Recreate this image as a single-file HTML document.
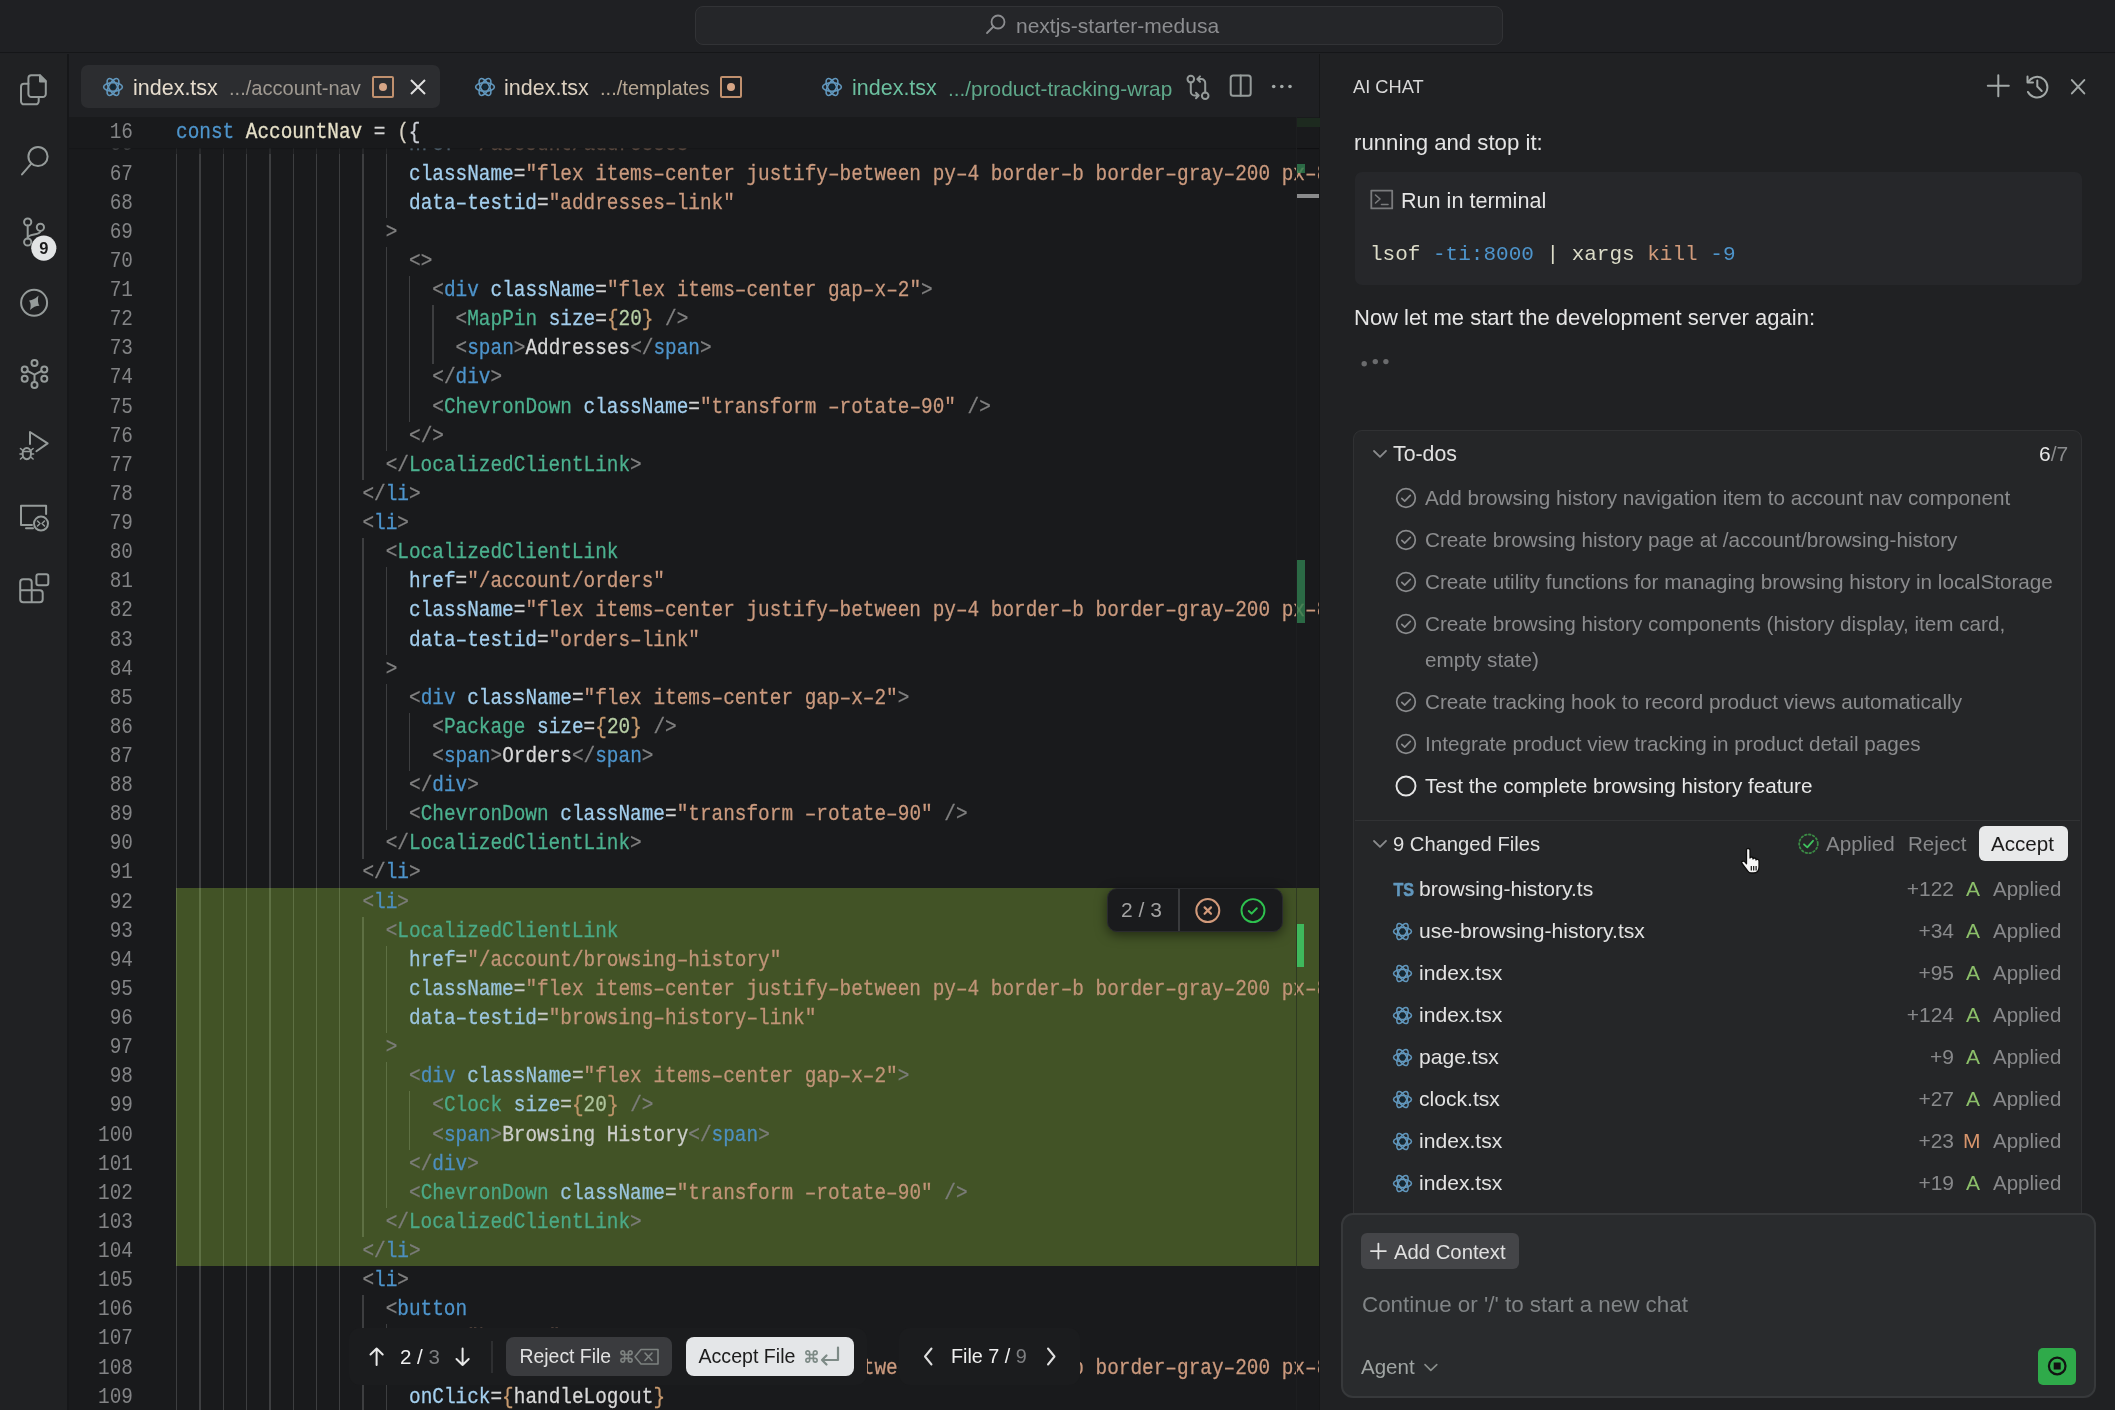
<!DOCTYPE html>
<html><head><meta charset="utf-8">
<style>
*{box-sizing:border-box;margin:0;padding:0}
html,body{width:2115px;height:1410px;overflow:hidden;background:#1f2023;font-family:"Liberation Sans",sans-serif}
body{will-change:transform}
.abs{position:absolute}
#title{position:absolute;left:0;top:0;width:2115px;height:53px;background:#1f2023;border-bottom:1px solid #151618}
#search{position:absolute;left:695px;top:6px;width:808px;height:39px;border-radius:8px;background:#252629;border:1px solid #323336}
#search .t{position:absolute;left:320px;top:6.5px;font-size:21px;color:#8c8d90;white-space:pre}
#act{position:absolute;left:0;top:54px;width:69px;height:1356px;background:#202123;border-right:2px solid #161719}
#tabs{position:absolute;left:69px;top:54px;width:1251px;height:63px;background:#1f2023}
.tab{position:absolute;top:11px;height:43px;border-radius:7px}
.tab.active{background:#2c2d30}
.tabtxt{position:absolute;top:10px;margin-top:1.5px;font-size:21.5px;white-space:pre}
#editor{position:absolute;left:69px;top:117px;width:1251px;height:1293px;background:#191a1c;overflow:hidden}
#code{position:absolute;left:-69px;top:-117px;width:1320px;height:1410px}
.ln{position:absolute;transform:scaleY(1.1);transform-origin:0 19.7px;-webkit-text-stroke:0.25px currentColor;font-family:"Liberation Mono",monospace;font-size:19.4px;line-height:29.12px;height:29.12px;white-space:pre;color:#d4d4d4}
.num{position:absolute;transform:scaleY(1.1);transform-origin:0 19.7px;left:60px;width:73px;text-align:right;font-family:"Liberation Mono",monospace;font-size:19.4px;line-height:29.12px;color:#838486}
.g{position:absolute;width:1.4px;background:#37383a}
.p{color:#808080} .t{color:#4e95cc} .c{color:#4cb18f} .a{color:#a3cfee} .s{color:#cb9a7e} .n{color:#b8cfa6} .b{color:#c89a6e} .x{color:#d8d8d8} .o{color:#d4d4d4} .k{color:#4e95cc}
#diff{position:absolute;left:176px;top:887.6px;width:1144px;height:378.4px;background:#425326}
#chat{position:absolute;left:1319px;top:54px;width:796px;height:1356px;background:#202123;border-left:1px solid #161718}
.ct{position:absolute;white-space:pre;color:#e4e4e4}
#term{position:absolute;left:1355px;top:172px;width:727px;height:113px;border-radius:7px;background:#26272a}
#todos{position:absolute;left:1353px;top:430px;width:729px;height:800px;border-radius:9px;background:#252628;border:1.5px solid #303133}
.todo{position:absolute;left:1425px;font-size:20.7px;color:#8b8c8e;white-space:pre}
.todo.cur{color:#e8e8e8}
.todo-ic{position:absolute;left:1395px;width:22px;height:22px}
.fic{position:absolute;left:1392px;width:22px;height:22px}
.tsic{font-weight:bold;font-size:17px;color:#4a8fbf;letter-spacing:-1px;position:relative;top:1px}
.fname{position:absolute;left:1419px;font-size:21.1px;color:#e2e2e2;white-space:pre}
.fplus{position:absolute;right:161px;font-size:21px;color:#88898b;white-space:pre}
.fst{position:absolute;left:1966px;font-size:21px;color:#8cbf6a;white-space:pre}
.fst.m{color:#d8956c;left:1963px}
.fapp{position:absolute;left:1993px;font-size:20.5px;color:#88898b;white-space:pre}
#input{position:absolute;left:1341px;top:1213px;width:755px;height:185px;border-radius:12px;background:#292b2d;border:2px solid #37393b}
</style></head><body>
<div id="title"><div id="search"><div class="t"><svg width="24" height="24" viewBox="0 0 24 24" style="position:absolute;left:-32px;top:-1px"><circle cx="14" cy="9" r="6.5" fill="none" stroke="#8c8d90" stroke-width="1.8"/><path d="M9.5 13.5L3 20" stroke="#8c8d90" stroke-width="1.8" stroke-linecap="round"/></svg>nextjs-starter-medusa</div></div></div>
<div id="act"></div>
<div id="tabs">
  <div class="tab active" style="left:12px;width:359px"></div>
</div>
<div class="abs" style="left:102px;top:76px"><svg width="22" height="22" viewBox="-11 -11 22 22"><g fill="none" stroke="#6197bd" stroke-width="1.6"><ellipse rx="9.4" ry="4.2"/><ellipse rx="9.4" ry="4.2" transform="rotate(60)"/><ellipse rx="9.4" ry="4.2" transform="rotate(120)"/></g><circle r="2.4" fill="#0f2a3a"/></svg></div>
<div class="tabtxt abs" style="left:133px;top:74px;color:#e6dccd">index.tsx</div>
<div class="tabtxt abs" style="left:229px;top:75px;color:#a09a92;font-size:20.1px">.../account-nav</div>
<div class="abs" style="left:372px;top:76px;width:22px;height:22px;border:2px solid #c0906e;border-radius:2px"><div style="position:absolute;left:5px;top:5px;width:8px;height:8px;border-radius:50%;background:#d6a586"></div></div>
<div class="abs" style="left:409px;top:78px"><svg width="18" height="18" viewBox="0 0 18 18"><path d="M2 2L16 16M16 2L2 16" stroke="#e0e0e0" stroke-width="2"/></svg></div>
<div class="abs" style="left:474px;top:76px"><svg width="22" height="22" viewBox="-11 -11 22 22"><g fill="none" stroke="#6197bd" stroke-width="1.6"><ellipse rx="9.4" ry="4.2"/><ellipse rx="9.4" ry="4.2" transform="rotate(60)"/><ellipse rx="9.4" ry="4.2" transform="rotate(120)"/></g><circle r="2.4" fill="#0f2a3a"/></svg></div>
<div class="tabtxt abs" style="left:504px;top:74px;color:#dcd0c0">index.tsx</div>
<div class="tabtxt abs" style="left:600px;top:75px;color:#b7a794;font-size:20.1px">.../templates</div>
<div class="abs" style="left:720px;top:76px;width:22px;height:22px;border:2px solid #c0906e;border-radius:2px"><div style="position:absolute;left:5px;top:5px;width:8px;height:8px;border-radius:50%;background:#d6a586"></div></div>
<div class="abs" style="left:821px;top:76px"><svg width="22" height="22" viewBox="-11 -11 22 22"><g fill="none" stroke="#6197bd" stroke-width="1.6"><ellipse rx="9.4" ry="4.2"/><ellipse rx="9.4" ry="4.2" transform="rotate(60)"/><ellipse rx="9.4" ry="4.2" transform="rotate(120)"/></g><circle r="2.4" fill="#0f2a3a"/></svg></div>
<div class="tabtxt abs" style="left:852px;top:74px;color:#6cbf9f">index.tsx</div>
<div class="tabtxt abs" style="left:948px;top:75px;color:#5fa88a;font-size:20.8px">.../product-tracking-wrap</div>

<div id="editor"><div id="code">
<div id="diff"></div>
<div class="g" style="left:176.00px;top:130.48px;height:29.42px;background:#3d3e40"></div><div class="g" style="left:199.30px;top:130.48px;height:29.42px;background:#3d3e40"></div><div class="g" style="left:222.60px;top:130.48px;height:29.42px;background:#3d3e40"></div><div class="g" style="left:245.90px;top:130.48px;height:29.42px;background:#3d3e40"></div><div class="g" style="left:269.20px;top:130.48px;height:29.42px;background:#3d3e40"></div><div class="g" style="left:292.50px;top:130.48px;height:29.42px;background:#3d3e40"></div><div class="g" style="left:315.80px;top:130.48px;height:29.42px;background:#3d3e40"></div><div class="g" style="left:339.10px;top:130.48px;height:29.42px;background:#3d3e40"></div><div class="g" style="left:362.40px;top:130.48px;height:29.42px;background:#3d3e40"></div><div class="g" style="left:385.70px;top:130.48px;height:29.42px;background:#3d3e40"></div><div class="g" style="left:176.00px;top:159.60px;height:29.42px;background:#3d3e40"></div><div class="g" style="left:199.30px;top:159.60px;height:29.42px;background:#3d3e40"></div><div class="g" style="left:222.60px;top:159.60px;height:29.42px;background:#3d3e40"></div><div class="g" style="left:245.90px;top:159.60px;height:29.42px;background:#3d3e40"></div><div class="g" style="left:269.20px;top:159.60px;height:29.42px;background:#3d3e40"></div><div class="g" style="left:292.50px;top:159.60px;height:29.42px;background:#3d3e40"></div><div class="g" style="left:315.80px;top:159.60px;height:29.42px;background:#3d3e40"></div><div class="g" style="left:339.10px;top:159.60px;height:29.42px;background:#3d3e40"></div><div class="g" style="left:362.40px;top:159.60px;height:29.42px;background:#3d3e40"></div><div class="g" style="left:385.70px;top:159.60px;height:29.42px;background:#3d3e40"></div><div class="g" style="left:176.00px;top:188.72px;height:29.42px;background:#3d3e40"></div><div class="g" style="left:199.30px;top:188.72px;height:29.42px;background:#3d3e40"></div><div class="g" style="left:222.60px;top:188.72px;height:29.42px;background:#3d3e40"></div><div class="g" style="left:245.90px;top:188.72px;height:29.42px;background:#3d3e40"></div><div class="g" style="left:269.20px;top:188.72px;height:29.42px;background:#3d3e40"></div><div class="g" style="left:292.50px;top:188.72px;height:29.42px;background:#3d3e40"></div><div class="g" style="left:315.80px;top:188.72px;height:29.42px;background:#3d3e40"></div><div class="g" style="left:339.10px;top:188.72px;height:29.42px;background:#3d3e40"></div><div class="g" style="left:362.40px;top:188.72px;height:29.42px;background:#3d3e40"></div><div class="g" style="left:385.70px;top:188.72px;height:29.42px;background:#3d3e40"></div><div class="g" style="left:176.00px;top:217.84px;height:29.42px;background:#3d3e40"></div><div class="g" style="left:199.30px;top:217.84px;height:29.42px;background:#3d3e40"></div><div class="g" style="left:222.60px;top:217.84px;height:29.42px;background:#3d3e40"></div><div class="g" style="left:245.90px;top:217.84px;height:29.42px;background:#3d3e40"></div><div class="g" style="left:269.20px;top:217.84px;height:29.42px;background:#3d3e40"></div><div class="g" style="left:292.50px;top:217.84px;height:29.42px;background:#3d3e40"></div><div class="g" style="left:315.80px;top:217.84px;height:29.42px;background:#3d3e40"></div><div class="g" style="left:339.10px;top:217.84px;height:29.42px;background:#3d3e40"></div><div class="g" style="left:362.40px;top:217.84px;height:29.42px;background:#3d3e40"></div><div class="g" style="left:176.00px;top:246.96px;height:29.42px;background:#3d3e40"></div><div class="g" style="left:199.30px;top:246.96px;height:29.42px;background:#3d3e40"></div><div class="g" style="left:222.60px;top:246.96px;height:29.42px;background:#3d3e40"></div><div class="g" style="left:245.90px;top:246.96px;height:29.42px;background:#3d3e40"></div><div class="g" style="left:269.20px;top:246.96px;height:29.42px;background:#3d3e40"></div><div class="g" style="left:292.50px;top:246.96px;height:29.42px;background:#3d3e40"></div><div class="g" style="left:315.80px;top:246.96px;height:29.42px;background:#3d3e40"></div><div class="g" style="left:339.10px;top:246.96px;height:29.42px;background:#3d3e40"></div><div class="g" style="left:362.40px;top:246.96px;height:29.42px;background:#3d3e40"></div><div class="g" style="left:385.70px;top:246.96px;height:29.42px;background:#3d3e40"></div><div class="g" style="left:176.00px;top:276.08px;height:29.42px;background:#3d3e40"></div><div class="g" style="left:199.30px;top:276.08px;height:29.42px;background:#3d3e40"></div><div class="g" style="left:222.60px;top:276.08px;height:29.42px;background:#3d3e40"></div><div class="g" style="left:245.90px;top:276.08px;height:29.42px;background:#3d3e40"></div><div class="g" style="left:269.20px;top:276.08px;height:29.42px;background:#3d3e40"></div><div class="g" style="left:292.50px;top:276.08px;height:29.42px;background:#3d3e40"></div><div class="g" style="left:315.80px;top:276.08px;height:29.42px;background:#3d3e40"></div><div class="g" style="left:339.10px;top:276.08px;height:29.42px;background:#3d3e40"></div><div class="g" style="left:362.40px;top:276.08px;height:29.42px;background:#3d3e40"></div><div class="g" style="left:385.70px;top:276.08px;height:29.42px;background:#3d3e40"></div><div class="g" style="left:409.00px;top:276.08px;height:29.42px;background:#3d3e40"></div><div class="g" style="left:176.00px;top:305.20px;height:29.42px;background:#3d3e40"></div><div class="g" style="left:199.30px;top:305.20px;height:29.42px;background:#3d3e40"></div><div class="g" style="left:222.60px;top:305.20px;height:29.42px;background:#3d3e40"></div><div class="g" style="left:245.90px;top:305.20px;height:29.42px;background:#3d3e40"></div><div class="g" style="left:269.20px;top:305.20px;height:29.42px;background:#3d3e40"></div><div class="g" style="left:292.50px;top:305.20px;height:29.42px;background:#3d3e40"></div><div class="g" style="left:315.80px;top:305.20px;height:29.42px;background:#3d3e40"></div><div class="g" style="left:339.10px;top:305.20px;height:29.42px;background:#3d3e40"></div><div class="g" style="left:362.40px;top:305.20px;height:29.42px;background:#3d3e40"></div><div class="g" style="left:385.70px;top:305.20px;height:29.42px;background:#3d3e40"></div><div class="g" style="left:409.00px;top:305.20px;height:29.42px;background:#3d3e40"></div><div class="g" style="left:432.30px;top:305.20px;height:29.42px;background:#3d3e40"></div><div class="g" style="left:176.00px;top:334.32px;height:29.42px;background:#3d3e40"></div><div class="g" style="left:199.30px;top:334.32px;height:29.42px;background:#3d3e40"></div><div class="g" style="left:222.60px;top:334.32px;height:29.42px;background:#3d3e40"></div><div class="g" style="left:245.90px;top:334.32px;height:29.42px;background:#3d3e40"></div><div class="g" style="left:269.20px;top:334.32px;height:29.42px;background:#3d3e40"></div><div class="g" style="left:292.50px;top:334.32px;height:29.42px;background:#3d3e40"></div><div class="g" style="left:315.80px;top:334.32px;height:29.42px;background:#3d3e40"></div><div class="g" style="left:339.10px;top:334.32px;height:29.42px;background:#3d3e40"></div><div class="g" style="left:362.40px;top:334.32px;height:29.42px;background:#3d3e40"></div><div class="g" style="left:385.70px;top:334.32px;height:29.42px;background:#3d3e40"></div><div class="g" style="left:409.00px;top:334.32px;height:29.42px;background:#3d3e40"></div><div class="g" style="left:432.30px;top:334.32px;height:29.42px;background:#3d3e40"></div><div class="g" style="left:176.00px;top:363.44px;height:29.42px;background:#3d3e40"></div><div class="g" style="left:199.30px;top:363.44px;height:29.42px;background:#3d3e40"></div><div class="g" style="left:222.60px;top:363.44px;height:29.42px;background:#3d3e40"></div><div class="g" style="left:245.90px;top:363.44px;height:29.42px;background:#3d3e40"></div><div class="g" style="left:269.20px;top:363.44px;height:29.42px;background:#3d3e40"></div><div class="g" style="left:292.50px;top:363.44px;height:29.42px;background:#3d3e40"></div><div class="g" style="left:315.80px;top:363.44px;height:29.42px;background:#3d3e40"></div><div class="g" style="left:339.10px;top:363.44px;height:29.42px;background:#3d3e40"></div><div class="g" style="left:362.40px;top:363.44px;height:29.42px;background:#3d3e40"></div><div class="g" style="left:385.70px;top:363.44px;height:29.42px;background:#3d3e40"></div><div class="g" style="left:409.00px;top:363.44px;height:29.42px;background:#3d3e40"></div><div class="g" style="left:176.00px;top:392.56px;height:29.42px;background:#3d3e40"></div><div class="g" style="left:199.30px;top:392.56px;height:29.42px;background:#3d3e40"></div><div class="g" style="left:222.60px;top:392.56px;height:29.42px;background:#3d3e40"></div><div class="g" style="left:245.90px;top:392.56px;height:29.42px;background:#3d3e40"></div><div class="g" style="left:269.20px;top:392.56px;height:29.42px;background:#3d3e40"></div><div class="g" style="left:292.50px;top:392.56px;height:29.42px;background:#3d3e40"></div><div class="g" style="left:315.80px;top:392.56px;height:29.42px;background:#3d3e40"></div><div class="g" style="left:339.10px;top:392.56px;height:29.42px;background:#3d3e40"></div><div class="g" style="left:362.40px;top:392.56px;height:29.42px;background:#3d3e40"></div><div class="g" style="left:385.70px;top:392.56px;height:29.42px;background:#3d3e40"></div><div class="g" style="left:409.00px;top:392.56px;height:29.42px;background:#3d3e40"></div><div class="g" style="left:176.00px;top:421.68px;height:29.42px;background:#3d3e40"></div><div class="g" style="left:199.30px;top:421.68px;height:29.42px;background:#3d3e40"></div><div class="g" style="left:222.60px;top:421.68px;height:29.42px;background:#3d3e40"></div><div class="g" style="left:245.90px;top:421.68px;height:29.42px;background:#3d3e40"></div><div class="g" style="left:269.20px;top:421.68px;height:29.42px;background:#3d3e40"></div><div class="g" style="left:292.50px;top:421.68px;height:29.42px;background:#3d3e40"></div><div class="g" style="left:315.80px;top:421.68px;height:29.42px;background:#3d3e40"></div><div class="g" style="left:339.10px;top:421.68px;height:29.42px;background:#3d3e40"></div><div class="g" style="left:362.40px;top:421.68px;height:29.42px;background:#3d3e40"></div><div class="g" style="left:385.70px;top:421.68px;height:29.42px;background:#3d3e40"></div><div class="g" style="left:176.00px;top:450.80px;height:29.42px;background:#3d3e40"></div><div class="g" style="left:199.30px;top:450.80px;height:29.42px;background:#3d3e40"></div><div class="g" style="left:222.60px;top:450.80px;height:29.42px;background:#3d3e40"></div><div class="g" style="left:245.90px;top:450.80px;height:29.42px;background:#3d3e40"></div><div class="g" style="left:269.20px;top:450.80px;height:29.42px;background:#3d3e40"></div><div class="g" style="left:292.50px;top:450.80px;height:29.42px;background:#3d3e40"></div><div class="g" style="left:315.80px;top:450.80px;height:29.42px;background:#3d3e40"></div><div class="g" style="left:339.10px;top:450.80px;height:29.42px;background:#3d3e40"></div><div class="g" style="left:362.40px;top:450.80px;height:29.42px;background:#3d3e40"></div><div class="g" style="left:176.00px;top:479.92px;height:29.42px;background:#3d3e40"></div><div class="g" style="left:199.30px;top:479.92px;height:29.42px;background:#3d3e40"></div><div class="g" style="left:222.60px;top:479.92px;height:29.42px;background:#3d3e40"></div><div class="g" style="left:245.90px;top:479.92px;height:29.42px;background:#3d3e40"></div><div class="g" style="left:269.20px;top:479.92px;height:29.42px;background:#3d3e40"></div><div class="g" style="left:292.50px;top:479.92px;height:29.42px;background:#3d3e40"></div><div class="g" style="left:315.80px;top:479.92px;height:29.42px;background:#3d3e40"></div><div class="g" style="left:339.10px;top:479.92px;height:29.42px;background:#3d3e40"></div><div class="g" style="left:176.00px;top:509.04px;height:29.42px;background:#3d3e40"></div><div class="g" style="left:199.30px;top:509.04px;height:29.42px;background:#3d3e40"></div><div class="g" style="left:222.60px;top:509.04px;height:29.42px;background:#3d3e40"></div><div class="g" style="left:245.90px;top:509.04px;height:29.42px;background:#3d3e40"></div><div class="g" style="left:269.20px;top:509.04px;height:29.42px;background:#3d3e40"></div><div class="g" style="left:292.50px;top:509.04px;height:29.42px;background:#3d3e40"></div><div class="g" style="left:315.80px;top:509.04px;height:29.42px;background:#3d3e40"></div><div class="g" style="left:339.10px;top:509.04px;height:29.42px;background:#3d3e40"></div><div class="g" style="left:176.00px;top:538.16px;height:29.42px;background:#3d3e40"></div><div class="g" style="left:199.30px;top:538.16px;height:29.42px;background:#3d3e40"></div><div class="g" style="left:222.60px;top:538.16px;height:29.42px;background:#3d3e40"></div><div class="g" style="left:245.90px;top:538.16px;height:29.42px;background:#3d3e40"></div><div class="g" style="left:269.20px;top:538.16px;height:29.42px;background:#3d3e40"></div><div class="g" style="left:292.50px;top:538.16px;height:29.42px;background:#3d3e40"></div><div class="g" style="left:315.80px;top:538.16px;height:29.42px;background:#3d3e40"></div><div class="g" style="left:339.10px;top:538.16px;height:29.42px;background:#3d3e40"></div><div class="g" style="left:362.40px;top:538.16px;height:29.42px;background:#3d3e40"></div><div class="g" style="left:176.00px;top:567.28px;height:29.42px;background:#3d3e40"></div><div class="g" style="left:199.30px;top:567.28px;height:29.42px;background:#3d3e40"></div><div class="g" style="left:222.60px;top:567.28px;height:29.42px;background:#3d3e40"></div><div class="g" style="left:245.90px;top:567.28px;height:29.42px;background:#3d3e40"></div><div class="g" style="left:269.20px;top:567.28px;height:29.42px;background:#3d3e40"></div><div class="g" style="left:292.50px;top:567.28px;height:29.42px;background:#3d3e40"></div><div class="g" style="left:315.80px;top:567.28px;height:29.42px;background:#3d3e40"></div><div class="g" style="left:339.10px;top:567.28px;height:29.42px;background:#3d3e40"></div><div class="g" style="left:362.40px;top:567.28px;height:29.42px;background:#3d3e40"></div><div class="g" style="left:385.70px;top:567.28px;height:29.42px;background:#3d3e40"></div><div class="g" style="left:176.00px;top:596.40px;height:29.42px;background:#3d3e40"></div><div class="g" style="left:199.30px;top:596.40px;height:29.42px;background:#3d3e40"></div><div class="g" style="left:222.60px;top:596.40px;height:29.42px;background:#3d3e40"></div><div class="g" style="left:245.90px;top:596.40px;height:29.42px;background:#3d3e40"></div><div class="g" style="left:269.20px;top:596.40px;height:29.42px;background:#3d3e40"></div><div class="g" style="left:292.50px;top:596.40px;height:29.42px;background:#3d3e40"></div><div class="g" style="left:315.80px;top:596.40px;height:29.42px;background:#3d3e40"></div><div class="g" style="left:339.10px;top:596.40px;height:29.42px;background:#3d3e40"></div><div class="g" style="left:362.40px;top:596.40px;height:29.42px;background:#3d3e40"></div><div class="g" style="left:385.70px;top:596.40px;height:29.42px;background:#3d3e40"></div><div class="g" style="left:176.00px;top:625.52px;height:29.42px;background:#3d3e40"></div><div class="g" style="left:199.30px;top:625.52px;height:29.42px;background:#3d3e40"></div><div class="g" style="left:222.60px;top:625.52px;height:29.42px;background:#3d3e40"></div><div class="g" style="left:245.90px;top:625.52px;height:29.42px;background:#3d3e40"></div><div class="g" style="left:269.20px;top:625.52px;height:29.42px;background:#3d3e40"></div><div class="g" style="left:292.50px;top:625.52px;height:29.42px;background:#3d3e40"></div><div class="g" style="left:315.80px;top:625.52px;height:29.42px;background:#3d3e40"></div><div class="g" style="left:339.10px;top:625.52px;height:29.42px;background:#3d3e40"></div><div class="g" style="left:362.40px;top:625.52px;height:29.42px;background:#3d3e40"></div><div class="g" style="left:385.70px;top:625.52px;height:29.42px;background:#3d3e40"></div><div class="g" style="left:176.00px;top:654.64px;height:29.42px;background:#3d3e40"></div><div class="g" style="left:199.30px;top:654.64px;height:29.42px;background:#3d3e40"></div><div class="g" style="left:222.60px;top:654.64px;height:29.42px;background:#3d3e40"></div><div class="g" style="left:245.90px;top:654.64px;height:29.42px;background:#3d3e40"></div><div class="g" style="left:269.20px;top:654.64px;height:29.42px;background:#3d3e40"></div><div class="g" style="left:292.50px;top:654.64px;height:29.42px;background:#3d3e40"></div><div class="g" style="left:315.80px;top:654.64px;height:29.42px;background:#3d3e40"></div><div class="g" style="left:339.10px;top:654.64px;height:29.42px;background:#3d3e40"></div><div class="g" style="left:362.40px;top:654.64px;height:29.42px;background:#3d3e40"></div><div class="g" style="left:176.00px;top:683.76px;height:29.42px;background:#3d3e40"></div><div class="g" style="left:199.30px;top:683.76px;height:29.42px;background:#3d3e40"></div><div class="g" style="left:222.60px;top:683.76px;height:29.42px;background:#3d3e40"></div><div class="g" style="left:245.90px;top:683.76px;height:29.42px;background:#3d3e40"></div><div class="g" style="left:269.20px;top:683.76px;height:29.42px;background:#3d3e40"></div><div class="g" style="left:292.50px;top:683.76px;height:29.42px;background:#3d3e40"></div><div class="g" style="left:315.80px;top:683.76px;height:29.42px;background:#3d3e40"></div><div class="g" style="left:339.10px;top:683.76px;height:29.42px;background:#3d3e40"></div><div class="g" style="left:362.40px;top:683.76px;height:29.42px;background:#3d3e40"></div><div class="g" style="left:385.70px;top:683.76px;height:29.42px;background:#3d3e40"></div><div class="g" style="left:176.00px;top:712.88px;height:29.42px;background:#3d3e40"></div><div class="g" style="left:199.30px;top:712.88px;height:29.42px;background:#3d3e40"></div><div class="g" style="left:222.60px;top:712.88px;height:29.42px;background:#3d3e40"></div><div class="g" style="left:245.90px;top:712.88px;height:29.42px;background:#3d3e40"></div><div class="g" style="left:269.20px;top:712.88px;height:29.42px;background:#3d3e40"></div><div class="g" style="left:292.50px;top:712.88px;height:29.42px;background:#3d3e40"></div><div class="g" style="left:315.80px;top:712.88px;height:29.42px;background:#3d3e40"></div><div class="g" style="left:339.10px;top:712.88px;height:29.42px;background:#3d3e40"></div><div class="g" style="left:362.40px;top:712.88px;height:29.42px;background:#3d3e40"></div><div class="g" style="left:385.70px;top:712.88px;height:29.42px;background:#3d3e40"></div><div class="g" style="left:409.00px;top:712.88px;height:29.42px;background:#3d3e40"></div><div class="g" style="left:176.00px;top:742.00px;height:29.42px;background:#3d3e40"></div><div class="g" style="left:199.30px;top:742.00px;height:29.42px;background:#3d3e40"></div><div class="g" style="left:222.60px;top:742.00px;height:29.42px;background:#3d3e40"></div><div class="g" style="left:245.90px;top:742.00px;height:29.42px;background:#3d3e40"></div><div class="g" style="left:269.20px;top:742.00px;height:29.42px;background:#3d3e40"></div><div class="g" style="left:292.50px;top:742.00px;height:29.42px;background:#3d3e40"></div><div class="g" style="left:315.80px;top:742.00px;height:29.42px;background:#3d3e40"></div><div class="g" style="left:339.10px;top:742.00px;height:29.42px;background:#3d3e40"></div><div class="g" style="left:362.40px;top:742.00px;height:29.42px;background:#3d3e40"></div><div class="g" style="left:385.70px;top:742.00px;height:29.42px;background:#3d3e40"></div><div class="g" style="left:409.00px;top:742.00px;height:29.42px;background:#3d3e40"></div><div class="g" style="left:176.00px;top:771.12px;height:29.42px;background:#3d3e40"></div><div class="g" style="left:199.30px;top:771.12px;height:29.42px;background:#3d3e40"></div><div class="g" style="left:222.60px;top:771.12px;height:29.42px;background:#3d3e40"></div><div class="g" style="left:245.90px;top:771.12px;height:29.42px;background:#3d3e40"></div><div class="g" style="left:269.20px;top:771.12px;height:29.42px;background:#3d3e40"></div><div class="g" style="left:292.50px;top:771.12px;height:29.42px;background:#3d3e40"></div><div class="g" style="left:315.80px;top:771.12px;height:29.42px;background:#3d3e40"></div><div class="g" style="left:339.10px;top:771.12px;height:29.42px;background:#3d3e40"></div><div class="g" style="left:362.40px;top:771.12px;height:29.42px;background:#3d3e40"></div><div class="g" style="left:385.70px;top:771.12px;height:29.42px;background:#3d3e40"></div><div class="g" style="left:176.00px;top:800.24px;height:29.42px;background:#3d3e40"></div><div class="g" style="left:199.30px;top:800.24px;height:29.42px;background:#3d3e40"></div><div class="g" style="left:222.60px;top:800.24px;height:29.42px;background:#3d3e40"></div><div class="g" style="left:245.90px;top:800.24px;height:29.42px;background:#3d3e40"></div><div class="g" style="left:269.20px;top:800.24px;height:29.42px;background:#3d3e40"></div><div class="g" style="left:292.50px;top:800.24px;height:29.42px;background:#3d3e40"></div><div class="g" style="left:315.80px;top:800.24px;height:29.42px;background:#3d3e40"></div><div class="g" style="left:339.10px;top:800.24px;height:29.42px;background:#3d3e40"></div><div class="g" style="left:362.40px;top:800.24px;height:29.42px;background:#3d3e40"></div><div class="g" style="left:385.70px;top:800.24px;height:29.42px;background:#3d3e40"></div><div class="g" style="left:176.00px;top:829.36px;height:29.42px;background:#3d3e40"></div><div class="g" style="left:199.30px;top:829.36px;height:29.42px;background:#3d3e40"></div><div class="g" style="left:222.60px;top:829.36px;height:29.42px;background:#3d3e40"></div><div class="g" style="left:245.90px;top:829.36px;height:29.42px;background:#3d3e40"></div><div class="g" style="left:269.20px;top:829.36px;height:29.42px;background:#3d3e40"></div><div class="g" style="left:292.50px;top:829.36px;height:29.42px;background:#3d3e40"></div><div class="g" style="left:315.80px;top:829.36px;height:29.42px;background:#3d3e40"></div><div class="g" style="left:339.10px;top:829.36px;height:29.42px;background:#3d3e40"></div><div class="g" style="left:362.40px;top:829.36px;height:29.42px;background:#3d3e40"></div><div class="g" style="left:176.00px;top:858.48px;height:29.42px;background:#3d3e40"></div><div class="g" style="left:199.30px;top:858.48px;height:29.42px;background:#3d3e40"></div><div class="g" style="left:222.60px;top:858.48px;height:29.42px;background:#3d3e40"></div><div class="g" style="left:245.90px;top:858.48px;height:29.42px;background:#3d3e40"></div><div class="g" style="left:269.20px;top:858.48px;height:29.42px;background:#3d3e40"></div><div class="g" style="left:292.50px;top:858.48px;height:29.42px;background:#3d3e40"></div><div class="g" style="left:315.80px;top:858.48px;height:29.42px;background:#3d3e40"></div><div class="g" style="left:339.10px;top:858.48px;height:29.42px;background:#3d3e40"></div><div class="g" style="left:176.00px;top:887.60px;height:29.42px;background:#5e7043"></div><div class="g" style="left:199.30px;top:887.60px;height:29.42px;background:#5e7043"></div><div class="g" style="left:222.60px;top:887.60px;height:29.42px;background:#5e7043"></div><div class="g" style="left:245.90px;top:887.60px;height:29.42px;background:#5e7043"></div><div class="g" style="left:269.20px;top:887.60px;height:29.42px;background:#5e7043"></div><div class="g" style="left:292.50px;top:887.60px;height:29.42px;background:#5e7043"></div><div class="g" style="left:315.80px;top:887.60px;height:29.42px;background:#5e7043"></div><div class="g" style="left:339.10px;top:887.60px;height:29.42px;background:#5e7043"></div><div class="g" style="left:176.00px;top:916.72px;height:29.42px;background:#5e7043"></div><div class="g" style="left:199.30px;top:916.72px;height:29.42px;background:#5e7043"></div><div class="g" style="left:222.60px;top:916.72px;height:29.42px;background:#5e7043"></div><div class="g" style="left:245.90px;top:916.72px;height:29.42px;background:#5e7043"></div><div class="g" style="left:269.20px;top:916.72px;height:29.42px;background:#5e7043"></div><div class="g" style="left:292.50px;top:916.72px;height:29.42px;background:#5e7043"></div><div class="g" style="left:315.80px;top:916.72px;height:29.42px;background:#5e7043"></div><div class="g" style="left:339.10px;top:916.72px;height:29.42px;background:#5e7043"></div><div class="g" style="left:362.40px;top:916.72px;height:29.42px;background:#5e7043"></div><div class="g" style="left:176.00px;top:945.84px;height:29.42px;background:#5e7043"></div><div class="g" style="left:199.30px;top:945.84px;height:29.42px;background:#5e7043"></div><div class="g" style="left:222.60px;top:945.84px;height:29.42px;background:#5e7043"></div><div class="g" style="left:245.90px;top:945.84px;height:29.42px;background:#5e7043"></div><div class="g" style="left:269.20px;top:945.84px;height:29.42px;background:#5e7043"></div><div class="g" style="left:292.50px;top:945.84px;height:29.42px;background:#5e7043"></div><div class="g" style="left:315.80px;top:945.84px;height:29.42px;background:#5e7043"></div><div class="g" style="left:339.10px;top:945.84px;height:29.42px;background:#5e7043"></div><div class="g" style="left:362.40px;top:945.84px;height:29.42px;background:#5e7043"></div><div class="g" style="left:385.70px;top:945.84px;height:29.42px;background:#5e7043"></div><div class="g" style="left:176.00px;top:974.96px;height:29.42px;background:#5e7043"></div><div class="g" style="left:199.30px;top:974.96px;height:29.42px;background:#5e7043"></div><div class="g" style="left:222.60px;top:974.96px;height:29.42px;background:#5e7043"></div><div class="g" style="left:245.90px;top:974.96px;height:29.42px;background:#5e7043"></div><div class="g" style="left:269.20px;top:974.96px;height:29.42px;background:#5e7043"></div><div class="g" style="left:292.50px;top:974.96px;height:29.42px;background:#5e7043"></div><div class="g" style="left:315.80px;top:974.96px;height:29.42px;background:#5e7043"></div><div class="g" style="left:339.10px;top:974.96px;height:29.42px;background:#5e7043"></div><div class="g" style="left:362.40px;top:974.96px;height:29.42px;background:#5e7043"></div><div class="g" style="left:385.70px;top:974.96px;height:29.42px;background:#5e7043"></div><div class="g" style="left:176.00px;top:1004.08px;height:29.42px;background:#5e7043"></div><div class="g" style="left:199.30px;top:1004.08px;height:29.42px;background:#5e7043"></div><div class="g" style="left:222.60px;top:1004.08px;height:29.42px;background:#5e7043"></div><div class="g" style="left:245.90px;top:1004.08px;height:29.42px;background:#5e7043"></div><div class="g" style="left:269.20px;top:1004.08px;height:29.42px;background:#5e7043"></div><div class="g" style="left:292.50px;top:1004.08px;height:29.42px;background:#5e7043"></div><div class="g" style="left:315.80px;top:1004.08px;height:29.42px;background:#5e7043"></div><div class="g" style="left:339.10px;top:1004.08px;height:29.42px;background:#5e7043"></div><div class="g" style="left:362.40px;top:1004.08px;height:29.42px;background:#5e7043"></div><div class="g" style="left:385.70px;top:1004.08px;height:29.42px;background:#5e7043"></div><div class="g" style="left:176.00px;top:1033.20px;height:29.42px;background:#5e7043"></div><div class="g" style="left:199.30px;top:1033.20px;height:29.42px;background:#5e7043"></div><div class="g" style="left:222.60px;top:1033.20px;height:29.42px;background:#5e7043"></div><div class="g" style="left:245.90px;top:1033.20px;height:29.42px;background:#5e7043"></div><div class="g" style="left:269.20px;top:1033.20px;height:29.42px;background:#5e7043"></div><div class="g" style="left:292.50px;top:1033.20px;height:29.42px;background:#5e7043"></div><div class="g" style="left:315.80px;top:1033.20px;height:29.42px;background:#5e7043"></div><div class="g" style="left:339.10px;top:1033.20px;height:29.42px;background:#5e7043"></div><div class="g" style="left:362.40px;top:1033.20px;height:29.42px;background:#5e7043"></div><div class="g" style="left:176.00px;top:1062.32px;height:29.42px;background:#5e7043"></div><div class="g" style="left:199.30px;top:1062.32px;height:29.42px;background:#5e7043"></div><div class="g" style="left:222.60px;top:1062.32px;height:29.42px;background:#5e7043"></div><div class="g" style="left:245.90px;top:1062.32px;height:29.42px;background:#5e7043"></div><div class="g" style="left:269.20px;top:1062.32px;height:29.42px;background:#5e7043"></div><div class="g" style="left:292.50px;top:1062.32px;height:29.42px;background:#5e7043"></div><div class="g" style="left:315.80px;top:1062.32px;height:29.42px;background:#5e7043"></div><div class="g" style="left:339.10px;top:1062.32px;height:29.42px;background:#5e7043"></div><div class="g" style="left:362.40px;top:1062.32px;height:29.42px;background:#5e7043"></div><div class="g" style="left:385.70px;top:1062.32px;height:29.42px;background:#5e7043"></div><div class="g" style="left:176.00px;top:1091.44px;height:29.42px;background:#5e7043"></div><div class="g" style="left:199.30px;top:1091.44px;height:29.42px;background:#5e7043"></div><div class="g" style="left:222.60px;top:1091.44px;height:29.42px;background:#5e7043"></div><div class="g" style="left:245.90px;top:1091.44px;height:29.42px;background:#5e7043"></div><div class="g" style="left:269.20px;top:1091.44px;height:29.42px;background:#5e7043"></div><div class="g" style="left:292.50px;top:1091.44px;height:29.42px;background:#5e7043"></div><div class="g" style="left:315.80px;top:1091.44px;height:29.42px;background:#5e7043"></div><div class="g" style="left:339.10px;top:1091.44px;height:29.42px;background:#5e7043"></div><div class="g" style="left:362.40px;top:1091.44px;height:29.42px;background:#5e7043"></div><div class="g" style="left:385.70px;top:1091.44px;height:29.42px;background:#5e7043"></div><div class="g" style="left:409.00px;top:1091.44px;height:29.42px;background:#5e7043"></div><div class="g" style="left:176.00px;top:1120.56px;height:29.42px;background:#5e7043"></div><div class="g" style="left:199.30px;top:1120.56px;height:29.42px;background:#5e7043"></div><div class="g" style="left:222.60px;top:1120.56px;height:29.42px;background:#5e7043"></div><div class="g" style="left:245.90px;top:1120.56px;height:29.42px;background:#5e7043"></div><div class="g" style="left:269.20px;top:1120.56px;height:29.42px;background:#5e7043"></div><div class="g" style="left:292.50px;top:1120.56px;height:29.42px;background:#5e7043"></div><div class="g" style="left:315.80px;top:1120.56px;height:29.42px;background:#5e7043"></div><div class="g" style="left:339.10px;top:1120.56px;height:29.42px;background:#5e7043"></div><div class="g" style="left:362.40px;top:1120.56px;height:29.42px;background:#5e7043"></div><div class="g" style="left:385.70px;top:1120.56px;height:29.42px;background:#5e7043"></div><div class="g" style="left:409.00px;top:1120.56px;height:29.42px;background:#5e7043"></div><div class="g" style="left:176.00px;top:1149.68px;height:29.42px;background:#5e7043"></div><div class="g" style="left:199.30px;top:1149.68px;height:29.42px;background:#5e7043"></div><div class="g" style="left:222.60px;top:1149.68px;height:29.42px;background:#5e7043"></div><div class="g" style="left:245.90px;top:1149.68px;height:29.42px;background:#5e7043"></div><div class="g" style="left:269.20px;top:1149.68px;height:29.42px;background:#5e7043"></div><div class="g" style="left:292.50px;top:1149.68px;height:29.42px;background:#5e7043"></div><div class="g" style="left:315.80px;top:1149.68px;height:29.42px;background:#5e7043"></div><div class="g" style="left:339.10px;top:1149.68px;height:29.42px;background:#5e7043"></div><div class="g" style="left:362.40px;top:1149.68px;height:29.42px;background:#5e7043"></div><div class="g" style="left:385.70px;top:1149.68px;height:29.42px;background:#5e7043"></div><div class="g" style="left:176.00px;top:1178.80px;height:29.42px;background:#5e7043"></div><div class="g" style="left:199.30px;top:1178.80px;height:29.42px;background:#5e7043"></div><div class="g" style="left:222.60px;top:1178.80px;height:29.42px;background:#5e7043"></div><div class="g" style="left:245.90px;top:1178.80px;height:29.42px;background:#5e7043"></div><div class="g" style="left:269.20px;top:1178.80px;height:29.42px;background:#5e7043"></div><div class="g" style="left:292.50px;top:1178.80px;height:29.42px;background:#5e7043"></div><div class="g" style="left:315.80px;top:1178.80px;height:29.42px;background:#5e7043"></div><div class="g" style="left:339.10px;top:1178.80px;height:29.42px;background:#5e7043"></div><div class="g" style="left:362.40px;top:1178.80px;height:29.42px;background:#5e7043"></div><div class="g" style="left:385.70px;top:1178.80px;height:29.42px;background:#5e7043"></div><div class="g" style="left:176.00px;top:1207.92px;height:29.42px;background:#5e7043"></div><div class="g" style="left:199.30px;top:1207.92px;height:29.42px;background:#5e7043"></div><div class="g" style="left:222.60px;top:1207.92px;height:29.42px;background:#5e7043"></div><div class="g" style="left:245.90px;top:1207.92px;height:29.42px;background:#5e7043"></div><div class="g" style="left:269.20px;top:1207.92px;height:29.42px;background:#5e7043"></div><div class="g" style="left:292.50px;top:1207.92px;height:29.42px;background:#5e7043"></div><div class="g" style="left:315.80px;top:1207.92px;height:29.42px;background:#5e7043"></div><div class="g" style="left:339.10px;top:1207.92px;height:29.42px;background:#5e7043"></div><div class="g" style="left:362.40px;top:1207.92px;height:29.42px;background:#5e7043"></div><div class="g" style="left:176.00px;top:1237.04px;height:29.42px;background:#5e7043"></div><div class="g" style="left:199.30px;top:1237.04px;height:29.42px;background:#5e7043"></div><div class="g" style="left:222.60px;top:1237.04px;height:29.42px;background:#5e7043"></div><div class="g" style="left:245.90px;top:1237.04px;height:29.42px;background:#5e7043"></div><div class="g" style="left:269.20px;top:1237.04px;height:29.42px;background:#5e7043"></div><div class="g" style="left:292.50px;top:1237.04px;height:29.42px;background:#5e7043"></div><div class="g" style="left:315.80px;top:1237.04px;height:29.42px;background:#5e7043"></div><div class="g" style="left:339.10px;top:1237.04px;height:29.42px;background:#5e7043"></div><div class="g" style="left:176.00px;top:1266.16px;height:29.42px;background:#3d3e40"></div><div class="g" style="left:199.30px;top:1266.16px;height:29.42px;background:#3d3e40"></div><div class="g" style="left:222.60px;top:1266.16px;height:29.42px;background:#3d3e40"></div><div class="g" style="left:245.90px;top:1266.16px;height:29.42px;background:#3d3e40"></div><div class="g" style="left:269.20px;top:1266.16px;height:29.42px;background:#3d3e40"></div><div class="g" style="left:292.50px;top:1266.16px;height:29.42px;background:#3d3e40"></div><div class="g" style="left:315.80px;top:1266.16px;height:29.42px;background:#3d3e40"></div><div class="g" style="left:339.10px;top:1266.16px;height:29.42px;background:#3d3e40"></div><div class="g" style="left:176.00px;top:1295.28px;height:29.42px;background:#3d3e40"></div><div class="g" style="left:199.30px;top:1295.28px;height:29.42px;background:#3d3e40"></div><div class="g" style="left:222.60px;top:1295.28px;height:29.42px;background:#3d3e40"></div><div class="g" style="left:245.90px;top:1295.28px;height:29.42px;background:#3d3e40"></div><div class="g" style="left:269.20px;top:1295.28px;height:29.42px;background:#3d3e40"></div><div class="g" style="left:292.50px;top:1295.28px;height:29.42px;background:#3d3e40"></div><div class="g" style="left:315.80px;top:1295.28px;height:29.42px;background:#3d3e40"></div><div class="g" style="left:339.10px;top:1295.28px;height:29.42px;background:#3d3e40"></div><div class="g" style="left:362.40px;top:1295.28px;height:29.42px;background:#3d3e40"></div><div class="g" style="left:176.00px;top:1324.40px;height:29.42px;background:#3d3e40"></div><div class="g" style="left:199.30px;top:1324.40px;height:29.42px;background:#3d3e40"></div><div class="g" style="left:222.60px;top:1324.40px;height:29.42px;background:#3d3e40"></div><div class="g" style="left:245.90px;top:1324.40px;height:29.42px;background:#3d3e40"></div><div class="g" style="left:269.20px;top:1324.40px;height:29.42px;background:#3d3e40"></div><div class="g" style="left:292.50px;top:1324.40px;height:29.42px;background:#3d3e40"></div><div class="g" style="left:315.80px;top:1324.40px;height:29.42px;background:#3d3e40"></div><div class="g" style="left:339.10px;top:1324.40px;height:29.42px;background:#3d3e40"></div><div class="g" style="left:362.40px;top:1324.40px;height:29.42px;background:#3d3e40"></div><div class="g" style="left:385.70px;top:1324.40px;height:29.42px;background:#3d3e40"></div><div class="g" style="left:176.00px;top:1353.52px;height:29.42px;background:#3d3e40"></div><div class="g" style="left:199.30px;top:1353.52px;height:29.42px;background:#3d3e40"></div><div class="g" style="left:222.60px;top:1353.52px;height:29.42px;background:#3d3e40"></div><div class="g" style="left:245.90px;top:1353.52px;height:29.42px;background:#3d3e40"></div><div class="g" style="left:269.20px;top:1353.52px;height:29.42px;background:#3d3e40"></div><div class="g" style="left:292.50px;top:1353.52px;height:29.42px;background:#3d3e40"></div><div class="g" style="left:315.80px;top:1353.52px;height:29.42px;background:#3d3e40"></div><div class="g" style="left:339.10px;top:1353.52px;height:29.42px;background:#3d3e40"></div><div class="g" style="left:362.40px;top:1353.52px;height:29.42px;background:#3d3e40"></div><div class="g" style="left:385.70px;top:1353.52px;height:29.42px;background:#3d3e40"></div><div class="g" style="left:176.00px;top:1382.64px;height:29.42px;background:#3d3e40"></div><div class="g" style="left:199.30px;top:1382.64px;height:29.42px;background:#3d3e40"></div><div class="g" style="left:222.60px;top:1382.64px;height:29.42px;background:#3d3e40"></div><div class="g" style="left:245.90px;top:1382.64px;height:29.42px;background:#3d3e40"></div><div class="g" style="left:269.20px;top:1382.64px;height:29.42px;background:#3d3e40"></div><div class="g" style="left:292.50px;top:1382.64px;height:29.42px;background:#3d3e40"></div><div class="g" style="left:315.80px;top:1382.64px;height:29.42px;background:#3d3e40"></div><div class="g" style="left:339.10px;top:1382.64px;height:29.42px;background:#3d3e40"></div><div class="g" style="left:362.40px;top:1382.64px;height:29.42px;background:#3d3e40"></div><div class="g" style="left:385.70px;top:1382.64px;height:29.42px;background:#3d3e40"></div>
<div class="num" style="top:131.48px">66</div><div class="num" style="top:160.60px">67</div><div class="num" style="top:189.72px">68</div><div class="num" style="top:218.84px">69</div><div class="num" style="top:247.96px">70</div><div class="num" style="top:277.08px">71</div><div class="num" style="top:306.20px">72</div><div class="num" style="top:335.32px">73</div><div class="num" style="top:364.44px">74</div><div class="num" style="top:393.56px">75</div><div class="num" style="top:422.68px">76</div><div class="num" style="top:451.80px">77</div><div class="num" style="top:480.92px">78</div><div class="num" style="top:510.04px">79</div><div class="num" style="top:539.16px">80</div><div class="num" style="top:568.28px">81</div><div class="num" style="top:597.40px">82</div><div class="num" style="top:626.52px">83</div><div class="num" style="top:655.64px">84</div><div class="num" style="top:684.76px">85</div><div class="num" style="top:713.88px">86</div><div class="num" style="top:743.00px">87</div><div class="num" style="top:772.12px">88</div><div class="num" style="top:801.24px">89</div><div class="num" style="top:830.36px">90</div><div class="num" style="top:859.48px">91</div><div class="num" style="top:888.60px">92</div><div class="num" style="top:917.72px">93</div><div class="num" style="top:946.84px">94</div><div class="num" style="top:975.96px">95</div><div class="num" style="top:1005.08px">96</div><div class="num" style="top:1034.20px">97</div><div class="num" style="top:1063.32px">98</div><div class="num" style="top:1092.44px">99</div><div class="num" style="top:1121.56px">100</div><div class="num" style="top:1150.68px">101</div><div class="num" style="top:1179.80px">102</div><div class="num" style="top:1208.92px">103</div><div class="num" style="top:1238.04px">104</div><div class="num" style="top:1267.16px">105</div><div class="num" style="top:1296.28px">106</div><div class="num" style="top:1325.40px">107</div><div class="num" style="top:1354.52px">108</div><div class="num" style="top:1383.64px">109</div>
<div class="ln" style="top:131.48px;left:409.00px"><span class="a">href</span><span class="o">=</span><span class="s">&quot;/account/addresses&quot;</span></div><div class="ln" style="top:160.60px;left:409.00px"><span class="a">className</span><span class="o">=</span><span class="s">&quot;flex items&#8211;center justify&#8211;between py&#8211;4 border&#8211;b border&#8211;gray&#8211;200 px&#8211;8&quot;</span></div><div class="ln" style="top:189.72px;left:409.00px"><span class="a">data&#8211;testid</span><span class="o">=</span><span class="s">&quot;addresses&#8211;link&quot;</span></div><div class="ln" style="top:218.84px;left:385.70px"><span class="p">&gt;</span></div><div class="ln" style="top:247.96px;left:409.00px"><span class="p">&lt;</span><span class="p">&gt;</span></div><div class="ln" style="top:277.08px;left:432.30px"><span class="p">&lt;</span><span class="t">div</span> <span class="a">className</span><span class="o">=</span><span class="s">&quot;flex items&#8211;center gap&#8211;x&#8211;2&quot;</span><span class="p">&gt;</span></div><div class="ln" style="top:306.20px;left:455.60px"><span class="p">&lt;</span><span class="c">MapPin</span> <span class="a">size</span><span class="o">=</span><span class="b">{</span><span class="n">20</span><span class="b">}</span> <span class="p">/&gt;</span></div><div class="ln" style="top:335.32px;left:455.60px"><span class="p">&lt;</span><span class="t">span</span><span class="p">&gt;</span><span class="x">Addresses</span><span class="p">&lt;/</span><span class="t">span</span><span class="p">&gt;</span></div><div class="ln" style="top:364.44px;left:432.30px"><span class="p">&lt;/</span><span class="t">div</span><span class="p">&gt;</span></div><div class="ln" style="top:393.56px;left:432.30px"><span class="p">&lt;</span><span class="c">ChevronDown</span> <span class="a">className</span><span class="o">=</span><span class="s">&quot;transform &#8211;rotate&#8211;90&quot;</span> <span class="p">/&gt;</span></div><div class="ln" style="top:422.68px;left:409.00px"><span class="p">&lt;/</span><span class="p">&gt;</span></div><div class="ln" style="top:451.80px;left:385.70px"><span class="p">&lt;/</span><span class="c">LocalizedClientLink</span><span class="p">&gt;</span></div><div class="ln" style="top:480.92px;left:362.40px"><span class="p">&lt;/</span><span class="t">li</span><span class="p">&gt;</span></div><div class="ln" style="top:510.04px;left:362.40px"><span class="p">&lt;</span><span class="t">li</span><span class="p">&gt;</span></div><div class="ln" style="top:539.16px;left:385.70px"><span class="p">&lt;</span><span class="c">LocalizedClientLink</span></div><div class="ln" style="top:568.28px;left:409.00px"><span class="a">href</span><span class="o">=</span><span class="s">&quot;/account/orders&quot;</span></div><div class="ln" style="top:597.40px;left:409.00px"><span class="a">className</span><span class="o">=</span><span class="s">&quot;flex items&#8211;center justify&#8211;between py&#8211;4 border&#8211;b border&#8211;gray&#8211;200 px&#8211;8&quot;</span></div><div class="ln" style="top:626.52px;left:409.00px"><span class="a">data&#8211;testid</span><span class="o">=</span><span class="s">&quot;orders&#8211;link&quot;</span></div><div class="ln" style="top:655.64px;left:385.70px"><span class="p">&gt;</span></div><div class="ln" style="top:684.76px;left:409.00px"><span class="p">&lt;</span><span class="t">div</span> <span class="a">className</span><span class="o">=</span><span class="s">&quot;flex items&#8211;center gap&#8211;x&#8211;2&quot;</span><span class="p">&gt;</span></div><div class="ln" style="top:713.88px;left:432.30px"><span class="p">&lt;</span><span class="c">Package</span> <span class="a">size</span><span class="o">=</span><span class="b">{</span><span class="n">20</span><span class="b">}</span> <span class="p">/&gt;</span></div><div class="ln" style="top:743.00px;left:432.30px"><span class="p">&lt;</span><span class="t">span</span><span class="p">&gt;</span><span class="x">Orders</span><span class="p">&lt;/</span><span class="t">span</span><span class="p">&gt;</span></div><div class="ln" style="top:772.12px;left:409.00px"><span class="p">&lt;/</span><span class="t">div</span><span class="p">&gt;</span></div><div class="ln" style="top:801.24px;left:409.00px"><span class="p">&lt;</span><span class="c">ChevronDown</span> <span class="a">className</span><span class="o">=</span><span class="s">&quot;transform &#8211;rotate&#8211;90&quot;</span> <span class="p">/&gt;</span></div><div class="ln" style="top:830.36px;left:385.70px"><span class="p">&lt;/</span><span class="c">LocalizedClientLink</span><span class="p">&gt;</span></div><div class="ln" style="top:859.48px;left:362.40px"><span class="p">&lt;/</span><span class="t">li</span><span class="p">&gt;</span></div><div class="ln" style="top:888.60px;left:362.40px;opacity:.92"><span class="p">&lt;</span><span class="t">li</span><span class="p">&gt;</span></div><div class="ln" style="top:917.72px;left:385.70px;opacity:.92"><span class="p">&lt;</span><span class="c">LocalizedClientLink</span></div><div class="ln" style="top:946.84px;left:409.00px;opacity:.92"><span class="a">href</span><span class="o">=</span><span class="s">&quot;/account/browsing&#8211;history&quot;</span></div><div class="ln" style="top:975.96px;left:409.00px;opacity:.92"><span class="a">className</span><span class="o">=</span><span class="s">&quot;flex items&#8211;center justify&#8211;between py&#8211;4 border&#8211;b border&#8211;gray&#8211;200 px&#8211;8&quot;</span></div><div class="ln" style="top:1005.08px;left:409.00px;opacity:.92"><span class="a">data&#8211;testid</span><span class="o">=</span><span class="s">&quot;browsing&#8211;history&#8211;link&quot;</span></div><div class="ln" style="top:1034.20px;left:385.70px;opacity:.92"><span class="p">&gt;</span></div><div class="ln" style="top:1063.32px;left:409.00px;opacity:.92"><span class="p">&lt;</span><span class="t">div</span> <span class="a">className</span><span class="o">=</span><span class="s">&quot;flex items&#8211;center gap&#8211;x&#8211;2&quot;</span><span class="p">&gt;</span></div><div class="ln" style="top:1092.44px;left:432.30px;opacity:.92"><span class="p">&lt;</span><span class="c">Clock</span> <span class="a">size</span><span class="o">=</span><span class="b">{</span><span class="n">20</span><span class="b">}</span> <span class="p">/&gt;</span></div><div class="ln" style="top:1121.56px;left:432.30px;opacity:.92"><span class="p">&lt;</span><span class="t">span</span><span class="p">&gt;</span><span class="x">Browsing History</span><span class="p">&lt;/</span><span class="t">span</span><span class="p">&gt;</span></div><div class="ln" style="top:1150.68px;left:409.00px;opacity:.92"><span class="p">&lt;/</span><span class="t">div</span><span class="p">&gt;</span></div><div class="ln" style="top:1179.80px;left:409.00px;opacity:.92"><span class="p">&lt;</span><span class="c">ChevronDown</span> <span class="a">className</span><span class="o">=</span><span class="s">&quot;transform &#8211;rotate&#8211;90&quot;</span> <span class="p">/&gt;</span></div><div class="ln" style="top:1208.92px;left:385.70px;opacity:.92"><span class="p">&lt;/</span><span class="c">LocalizedClientLink</span><span class="p">&gt;</span></div><div class="ln" style="top:1238.04px;left:362.40px;opacity:.92"><span class="p">&lt;/</span><span class="t">li</span><span class="p">&gt;</span></div><div class="ln" style="top:1267.16px;left:362.40px"><span class="p">&lt;</span><span class="t">li</span><span class="p">&gt;</span></div><div class="ln" style="top:1296.28px;left:385.70px"><span class="p">&lt;</span><span class="t">button</span></div><div class="ln" style="top:1325.40px;left:409.00px"><span class="a">type</span><span class="o">=</span><span class="s">&quot;button&quot;</span></div><div class="ln" style="top:1354.52px;left:409.00px"><span class="a">className</span><span class="o">=</span><span class="s">&quot;flex items&#8211;center justify&#8211;between py&#8211;4 border&#8211;b border&#8211;gray&#8211;200 px&#8211;8 w&#8211;full&quot;</span></div><div class="ln" style="top:1383.64px;left:409.00px"><span class="a">onClick</span><span class="o">=</span><span class="b">{</span><span class="x">handleLogout</span><span class="b">}</span></div>
<div class="abs" style="left:0;top:117px;width:1320px;height:31px;background:#191a1c;box-shadow:0 1px 1px rgba(0,0,0,.35)"></div><div class="abs" style="left:0;top:148px;width:1296px;height:6px;background:rgba(25,26,28,.6)"></div>
<div class="num" style="top:119.20px">16</div>
<div class="ln" style="top:119.20px;left:176px"><span class="k">const</span> <span class="x" style="color:#e6e0c8">AccountNav</span> <span class="o">=</span> <span class="b" style="color:#d8d2c4">(</span><span class="b" style="color:#cdd0d8">{</span></div>
</div></div>

<div id="chat"></div>
<div class="ct" style="left:1353px;top:75.5px;font-size:18.3px;color:#d8d8d8">AI CHAT</div>
<div class="ct" style="left:1354px;top:130px;font-size:22.2px">running and stop it:</div>
<div id="term"></div>
<div class="ct" style="left:1401px;top:188px;font-size:21.6px">Run in terminal</div>
<div class="ct" style="left:1370px;top:242.5px;font-family:'Liberation Mono',monospace;font-size:21px;color:#dcdcc8">lsof <span style="color:#4e95cc">-ti:8000</span> | xargs <span style="color:#d09a7a">kill</span> <span style="color:#4e95cc">-9</span></div>
<div class="ct" style="left:1354px;top:305px;font-size:22px">Now let me start the development server again:</div>
<div id="todos"></div>
<div class="ct" style="left:1393px;top:442px;font-size:21.3px;color:#e0e0e0">To-dos</div>
<div class="ct" style="left:2039px;top:442px;font-size:21px;color:#e8e8e8">6<span style="color:#8a8b8d">/7</span></div>
<div class="todo-ic" style="top:487px"><svg width="22" height="22" viewBox="0 0 22 22"><circle cx="11" cy="11" r="9.3" fill="none" stroke="#8a8b8d" stroke-width="1.7"/><path d="M6.8 11.3l2.9 2.8 5.6-5.8" fill="none" stroke="#8a8b8d" stroke-width="1.7" stroke-linecap="round" stroke-linejoin="round"/></svg></div><div class="todo" style="top:485.5px">Add browsing history navigation item to account nav component</div><div class="todo-ic" style="top:529px"><svg width="22" height="22" viewBox="0 0 22 22"><circle cx="11" cy="11" r="9.3" fill="none" stroke="#8a8b8d" stroke-width="1.7"/><path d="M6.8 11.3l2.9 2.8 5.6-5.8" fill="none" stroke="#8a8b8d" stroke-width="1.7" stroke-linecap="round" stroke-linejoin="round"/></svg></div><div class="todo" style="top:527.5px">Create browsing history page at /account/browsing-history</div><div class="todo-ic" style="top:571px"><svg width="22" height="22" viewBox="0 0 22 22"><circle cx="11" cy="11" r="9.3" fill="none" stroke="#8a8b8d" stroke-width="1.7"/><path d="M6.8 11.3l2.9 2.8 5.6-5.8" fill="none" stroke="#8a8b8d" stroke-width="1.7" stroke-linecap="round" stroke-linejoin="round"/></svg></div><div class="todo" style="top:569.5px">Create utility functions for managing browsing history in localStorage</div><div class="todo-ic" style="top:613px"><svg width="22" height="22" viewBox="0 0 22 22"><circle cx="11" cy="11" r="9.3" fill="none" stroke="#8a8b8d" stroke-width="1.7"/><path d="M6.8 11.3l2.9 2.8 5.6-5.8" fill="none" stroke="#8a8b8d" stroke-width="1.7" stroke-linecap="round" stroke-linejoin="round"/></svg></div><div class="todo" style="top:611.5px">Create browsing history components (history display, item card,</div><div class="todo-ic" style="top:691px"><svg width="22" height="22" viewBox="0 0 22 22"><circle cx="11" cy="11" r="9.3" fill="none" stroke="#8a8b8d" stroke-width="1.7"/><path d="M6.8 11.3l2.9 2.8 5.6-5.8" fill="none" stroke="#8a8b8d" stroke-width="1.7" stroke-linecap="round" stroke-linejoin="round"/></svg></div><div class="todo" style="top:689.5px">Create tracking hook to record product views automatically</div><div class="todo-ic" style="top:733px"><svg width="22" height="22" viewBox="0 0 22 22"><circle cx="11" cy="11" r="9.3" fill="none" stroke="#8a8b8d" stroke-width="1.7"/><path d="M6.8 11.3l2.9 2.8 5.6-5.8" fill="none" stroke="#8a8b8d" stroke-width="1.7" stroke-linecap="round" stroke-linejoin="round"/></svg></div><div class="todo" style="top:731.5px">Integrate product view tracking in product detail pages</div><div class="todo" style="top:647.5px">empty state)</div><div class="todo-ic" style="top:775px"><svg width="22" height="22" viewBox="0 0 22 22"><circle cx="11" cy="11" r="9.5" fill="none" stroke="#e6e6e6" stroke-width="1.9"/></svg></div><div class="todo cur" style="top:773.5px">Test the complete browsing history feature</div>
<div class="abs" style="left:1355px;top:819.5px;width:725px;height:1.5px;background:#313234"></div>
<div class="ct" style="left:1393px;top:832.5px;font-size:20.2px;color:#e0e0e0">9 Changed Files</div>
<div class="ct" style="left:1826px;top:832px;font-size:20.6px;color:#88898b">Applied</div>
<div class="ct" style="left:1908px;top:832px;font-size:20.6px;color:#88898b">Reject</div>
<div class="abs" style="left:1979px;top:826px;width:89px;height:35px;border-radius:6px;background:#e8e9ea"></div>
<div class="ct" style="left:1991px;top:832px;font-size:20.6px;color:#1b1b1b">Accept</div>
<div class="fic" style="top:879px"><svg width="24" height="22" style="position:relative;left:1px;top:-2px"><text x="0.5" y="18.5" textLength="20.5" lengthAdjust="spacingAndGlyphs" style="font-family:'Liberation Sans';font-weight:700;font-size:19px" fill="#6197bd" stroke="#6197bd" stroke-width="0.6">TS</text></svg></div><div class="fname" style="top:877px">browsing-history.ts</div><div class="fplus" style="top:877px">+122</div><div class="fst " style="top:877px">A</div><div class="fapp" style="top:877px">Applied</div><div class="fic" style="top:921px"><svg width="21" height="21" viewBox="-11 -11 22 22"><g fill="none" stroke="#6197bd" stroke-width="1.6"><ellipse rx="9.4" ry="4.2"/><ellipse rx="9.4" ry="4.2" transform="rotate(60)"/><ellipse rx="9.4" ry="4.2" transform="rotate(120)"/></g><circle r="2.4" fill="#0f2a3a"/></svg></div><div class="fname" style="top:919px">use-browsing-history.tsx</div><div class="fplus" style="top:919px">+34</div><div class="fst " style="top:919px">A</div><div class="fapp" style="top:919px">Applied</div><div class="fic" style="top:963px"><svg width="21" height="21" viewBox="-11 -11 22 22"><g fill="none" stroke="#6197bd" stroke-width="1.6"><ellipse rx="9.4" ry="4.2"/><ellipse rx="9.4" ry="4.2" transform="rotate(60)"/><ellipse rx="9.4" ry="4.2" transform="rotate(120)"/></g><circle r="2.4" fill="#0f2a3a"/></svg></div><div class="fname" style="top:961px">index.tsx</div><div class="fplus" style="top:961px">+95</div><div class="fst " style="top:961px">A</div><div class="fapp" style="top:961px">Applied</div><div class="fic" style="top:1005px"><svg width="21" height="21" viewBox="-11 -11 22 22"><g fill="none" stroke="#6197bd" stroke-width="1.6"><ellipse rx="9.4" ry="4.2"/><ellipse rx="9.4" ry="4.2" transform="rotate(60)"/><ellipse rx="9.4" ry="4.2" transform="rotate(120)"/></g><circle r="2.4" fill="#0f2a3a"/></svg></div><div class="fname" style="top:1003px">index.tsx</div><div class="fplus" style="top:1003px">+124</div><div class="fst " style="top:1003px">A</div><div class="fapp" style="top:1003px">Applied</div><div class="fic" style="top:1047px"><svg width="21" height="21" viewBox="-11 -11 22 22"><g fill="none" stroke="#6197bd" stroke-width="1.6"><ellipse rx="9.4" ry="4.2"/><ellipse rx="9.4" ry="4.2" transform="rotate(60)"/><ellipse rx="9.4" ry="4.2" transform="rotate(120)"/></g><circle r="2.4" fill="#0f2a3a"/></svg></div><div class="fname" style="top:1045px">page.tsx</div><div class="fplus" style="top:1045px">+9</div><div class="fst " style="top:1045px">A</div><div class="fapp" style="top:1045px">Applied</div><div class="fic" style="top:1089px"><svg width="21" height="21" viewBox="-11 -11 22 22"><g fill="none" stroke="#6197bd" stroke-width="1.6"><ellipse rx="9.4" ry="4.2"/><ellipse rx="9.4" ry="4.2" transform="rotate(60)"/><ellipse rx="9.4" ry="4.2" transform="rotate(120)"/></g><circle r="2.4" fill="#0f2a3a"/></svg></div><div class="fname" style="top:1087px">clock.tsx</div><div class="fplus" style="top:1087px">+27</div><div class="fst " style="top:1087px">A</div><div class="fapp" style="top:1087px">Applied</div><div class="fic" style="top:1131px"><svg width="21" height="21" viewBox="-11 -11 22 22"><g fill="none" stroke="#6197bd" stroke-width="1.6"><ellipse rx="9.4" ry="4.2"/><ellipse rx="9.4" ry="4.2" transform="rotate(60)"/><ellipse rx="9.4" ry="4.2" transform="rotate(120)"/></g><circle r="2.4" fill="#0f2a3a"/></svg></div><div class="fname" style="top:1129px">index.tsx</div><div class="fplus" style="top:1129px">+23</div><div class="fst m" style="top:1129px">M</div><div class="fapp" style="top:1129px">Applied</div><div class="fic" style="top:1173px"><svg width="21" height="21" viewBox="-11 -11 22 22"><g fill="none" stroke="#6197bd" stroke-width="1.6"><ellipse rx="9.4" ry="4.2"/><ellipse rx="9.4" ry="4.2" transform="rotate(60)"/><ellipse rx="9.4" ry="4.2" transform="rotate(120)"/></g><circle r="2.4" fill="#0f2a3a"/></svg></div><div class="fname" style="top:1171px">index.tsx</div><div class="fplus" style="top:1171px">+19</div><div class="fst " style="top:1171px">A</div><div class="fapp" style="top:1171px">Applied</div>
<div id="input"></div>
<div class="abs" style="left:1361px;top:1233px;width:158px;height:35.5px;border-radius:6px;background:#444548"></div>
<div class="ct" style="left:1394px;top:1240.5px;font-size:20.3px;color:#e0e0e0">Add Context</div>
<div class="ct" style="left:1362px;top:1291.5px;font-size:22.4px;color:#808486">Continue or '/' to start a new chat</div>
<div class="ct" style="left:1361px;top:1355px;font-size:20.5px;color:#a0a5a3">Agent</div>
<div class="abs" style="left:2038px;top:1348px;width:38px;height:37px;border-radius:5px;background:#2faa4a"></div>

<!-- overview ruler -->
<div class="abs" style="left:1296px;top:117px;width:1px;height:1293px;background:#1d1e20"></div>
<div class="abs" style="left:1297px;top:118px;width:23px;height:9px;background:#1d2a1f"></div>
<div class="abs" style="left:1297px;top:164px;width:8px;height:9px;background:rgba(47,125,78,.82)"></div>
<div class="abs" style="left:1297px;top:194px;width:22px;height:4px;background:#8a8b8c"></div>
<div class="abs" style="left:1297px;top:560px;width:8px;height:63px;background:rgba(47,125,78,.82)"></div>
<div class="abs" style="left:1296px;top:887.6px;width:1px;height:378.4px;background:#2f3a22"></div>
<div class="abs" style="left:1297px;top:924px;width:7px;height:43px;background:#3fb85c"></div>
<!-- diff widget -->
<div class="abs" style="left:1107px;top:887.6px;width:176px;height:44px;background:#1a1b1d;border-radius:10px;border:1px solid #2a2b2e;box-shadow:0 3px 12px rgba(0,0,0,.5)"></div>
<div class="abs" style="left:1178px;top:889px;width:2px;height:42px;background:#3a3b3d"></div>
<div class="ct" style="left:1121px;top:898px;font-size:21px;color:#a3a3a3">2 / 3</div>
<svg class="abs" style="left:0;top:0" width="1320" height="1410">
 <circle cx="1207.8" cy="910.6" r="11.5" fill="none" stroke="#d29a7a" stroke-width="2"/>
 <path d="M1204.6 907.4L1211 913.8M1211 907.4L1204.6 913.8" stroke="#d29a7a" stroke-width="2.2" stroke-linecap="round"/>
 <circle cx="1253" cy="910.6" r="11.5" fill="none" stroke="#2ec24f" stroke-width="1.9"/>
 <path d="M1248.8 911L1251.6 913.6L1256.8 908.3" fill="none" stroke="#2ec24f" stroke-width="2" stroke-linecap="round" stroke-linejoin="round"/>
</svg>
<!-- bottom toolbar -->
<div class="abs" style="left:348.5px;top:1328px;width:518px;height:57px;background:#1b1c1e;border-radius:11px"></div>
<div class="abs" style="left:899px;top:1328px;width:181px;height:57px;background:#1b1c1e;border-radius:11px"></div>
<div class="abs" style="left:491px;top:1341px;width:2px;height:32px;background:#2e2f31"></div>
<div class="abs" style="left:506px;top:1337px;width:166px;height:38.5px;background:#3a3b3e;border-radius:8px"></div>
<div class="abs" style="left:685.5px;top:1337px;width:168px;height:38.5px;background:#e4e6e8;border-radius:8px"></div>
<div class="ct" style="left:400px;top:1345px;font-size:20.5px;color:#f0f0f0">2 / <span style="color:#7d7e80">3</span></div>
<div class="ct" style="left:519.5px;top:1345px;font-size:19.4px;color:#e2e2e2">Reject File</div>
<svg class="abs" style="left:619px;top:1349px" width="15" height="15" viewBox="0 0 24 24"><path d="M15 6v12a3 3 0 1 0 3-3H6a3 3 0 1 0 3 3V6a3 3 0 1 0-3 3h12a3 3 0 1 0-3-3" fill="none" stroke="#7d8280" stroke-width="2.6"/></svg>
<div class="ct" style="left:698.5px;top:1345px;font-size:19.6px;color:#1c1c1c">Accept File</div>
<svg class="abs" style="left:804px;top:1349px" width="15" height="15" viewBox="0 0 24 24"><path d="M15 6v12a3 3 0 1 0 3-3H6a3 3 0 1 0 3 3V6a3 3 0 1 0-3 3h12a3 3 0 1 0-3-3" fill="none" stroke="#7d8a86" stroke-width="2.6"/></svg>
<div class="ct" style="left:951px;top:1345px;font-size:19.8px;color:#f0f0f0">File 7 / <span style="color:#7d7e80">9</span></div>
<svg class="abs" style="left:0;top:0" width="1320" height="1410">
 <g fill="none" stroke-width="2" stroke-linecap="round" stroke-linejoin="round">
 <path d="M376.6 1365V1348.5M370.5 1354.5L376.6 1348.5L382.7 1354.5" stroke="#e8e8e8"/>
 <path d="M462.6 1348.5V1365M456.5 1359L462.6 1365L468.7 1359" stroke="#e8e8e8"/>
 <path d="M641 1349.5H658V1364H641L635 1356.75Z M645 1353L652 1360.5M652 1353L645 1360.5" stroke="#7d8280" stroke-width="1.6"/>
 <path d="M838 1347.5V1360H822M826.5 1355.5L822 1360L826.5 1364.5" stroke="#7d8a86" stroke-width="2.2"/>
 <path d="M931.5 1348.5L925 1356.5L931.5 1364.5" stroke="#e0e0e0"/>
 <path d="M1048 1348.5L1054.5 1356.5L1048 1364.5" stroke="#e0e0e0"/>
 </g>
</svg>
<!-- chat extras -->
<svg class="abs" style="left:0;top:0" width="2115" height="1410">
 <g fill="none" stroke-linecap="round" stroke-linejoin="round">
  <rect x="1371.3" y="190.6" width="20.9" height="17.8" stroke="#7a7b7d" stroke-width="1.8"/>
  <path d="M1375.5 195L1380 199L1375.5 203M1381.5 204.5H1388" stroke="#7a7b7d" stroke-width="1.6"/>
  <path d="M1374 451L1380 456.8L1386 450.8" stroke="#8a8b8d" stroke-width="1.8"/>
  <path d="M1374 841L1380 846.8L1386 840.8" stroke="#8a8b8d" stroke-width="1.8"/>
  <circle cx="1808.5" cy="843.8" r="9.3" stroke="#3b8a45" stroke-width="1.8" stroke-dasharray="1.6 2.4"/>
  <path d="M1804 844.3L1807.3 847.3L1813 840.8" stroke="#3fc35e" stroke-width="1.8"/>
  <path d="M1378.4 1243.6V1258.6M1370.9 1251.1H1385.9" stroke="#e0e0e0" stroke-width="1.8"/>
  <path d="M1425 1364.6L1430.8 1370.4L1436.8 1364.6" stroke="#8a8f8d" stroke-width="1.6"/>
  <circle cx="2057.2" cy="1366" r="8.3" stroke="#121212" stroke-width="2.2"/>
 </g>
 <rect x="2053.7" y="1362.5" width="7" height="7" fill="#121212"/>
 <circle cx="1364.2" cy="363.7" r="2.7" fill="#6a6b6d"/><circle cx="1375.3" cy="361.6" r="2.7" fill="#6a6b6d"/><circle cx="1385.9" cy="361.6" r="2.7" fill="#6a6b6d"/>
 <!-- cursor -->
 <g transform="translate(1740.5 848)">
 <path d="M6 2Q6 0.5 7.75 0.5Q9.5 0.5 9.5 2V10Q9.5 9 11 9Q12.5 9 12.5 10.5V11Q12.5 10 14 10Q15.5 10 15.5 11.5V12Q15.5 11.3 17 11.3Q18.5 11.3 18.5 13V19Q18.5 25 13 25H10.5Q8.5 25 7.3 23.2L1.5 15.5Q0.6 14 2 13.3Q3.5 12.7 4.8 14.3L6 15.8Z" fill="#f6f6f6" stroke="#0e0e0e" stroke-width="1.3" stroke-linejoin="round"/>
 <path d="M10.8 18V22.5M13.2 18V22.5M15.6 18V22.5" stroke="#0e0e0e" stroke-width="1.2"/>
 </g>
</svg>

<svg class="abs" style="left:0;top:0;pointer-events:none" width="2115" height="1410" viewBox="0 0 2115 1410">
<g fill="none" stroke="#959b9a" stroke-width="2" stroke-linecap="round" stroke-linejoin="round">
  <!-- explorer -->
  <path d="M28.4 83.7H24a3 3 0 0 0-3 3V101.3a3 3 0 0 0 3 3H35.7a3 3 0 0 0 3-3V97"/>
  <path d="M31.4 75.2H40L45.8 81V94a3 3 0 0 1-3 3H31.4a3 3 0 0 1-3-3V78.2a3 3 0 0 1 3-3Z"/>
  <path d="M40 75.5V81.5H45.5" fill="#959b9a"/>
  <!-- search -->
  <circle cx="38" cy="156.5" r="9.6"/>
  <path d="M31.3 163.7L22 174.4"/>
  <!-- git -->
  <circle cx="27.7" cy="222" r="3.6"/>
  <circle cx="40.4" cy="227.3" r="3.6"/>
  <circle cx="27.7" cy="242" r="3.6"/>
  <path d="M27.7 225.6V238.4"/>
  <path d="M40.4 230.9C40.4 236 28 233 27.7 238"/>
  <!-- compass -->
  <circle cx="34.1" cy="302.8" r="13"/>
  <!-- extensions-like graph -->
  <circle cx="34.5" cy="363" r="3"/>
  <circle cx="24.7" cy="369.4" r="3"/>
  <circle cx="44.3" cy="369.4" r="3"/>
  <circle cx="24.7" cy="378.8" r="3"/>
  <circle cx="44.3" cy="378.8" r="3"/>
  <circle cx="34.5" cy="385" r="3"/>
  <path d="M27.4 370.8L34.5 374.6L41.6 370.8M34.5 374.6V382"/>
  <!-- run/debug -->
  <path d="M30 444V432L47.6 443.4L36.4 451.2"/>
  <ellipse cx="26.8" cy="453.6" rx="4.2" ry="5.6"/>
  <path d="M22.8 451.5H30.8M20.5 448.5L22.8 450.5M33.1 448.5L30.8 450.5M20 454H22.6M31 454H33.6M20.5 459L22.8 457M33.1 459L30.8 457" stroke-width="1.6"/>
  <!-- remote -->
  <path d="M32 524.9H21V505.7H46.1V514"/>
  <path d="M26 528.3H33"/>
  <circle cx="41" cy="523.6" r="7"/>
  <path d="M37.5 521L40 523.5L37.5 526M44.5 521L42 523.5L44.5 526" stroke-width="1.5"/>
  <!-- extensions -->
  <rect x="36.4" y="574.2" width="11.9" height="11" rx="2"/>
  <path d="M20.2 590.3V582.3a3 3 0 0 1 3-3H28.7a3 3 0 0 1 3 3V602.2M20.2 590.3H39.7a3 3 0 0 1 3 3V599.2a3 3 0 0 1-3 3H23.2a3 3 0 0 1-3-3Z"/>
  <!-- tab bar icons -->
  <circle cx="1190.8" cy="79.1" r="3.3"/>
  <circle cx="1205.2" cy="95.7" r="3.3"/>
  <path d="M1190.8 82.4V91.7a3.8 3.8 0 0 0 3.8 3.8H1198.5M1196 92.8L1198.7 95.5L1196 98.2"/>
  <path d="M1205.2 92.4V82.9a3.8 3.8 0 0 0-3.8-3.8H1197.5M1200 76.4L1197.3 79.1L1200 81.8"/>
  <rect x="1230.7" y="75.4" width="20" height="20.3" rx="2.5"/>
  <path d="M1240.7 75.6V95.5"/>
  <!-- chat header -->
  <path d="M1998.3 75.2V96.2M1987.8 85.7H2008.8" stroke="#a3a9a8"/>
  <path d="M2028.5 81.5A10.3 10.3 0 1 1 2028 92" stroke="#a3a9a8"/>
  <path d="M2027.5 76.5V82.5H2033" stroke="#a3a9a8"/>
  <path d="M2037.3 80.5V86.5L2041.7 91" stroke="#a3a9a8"/>
  <path d="M2071.9 80.1L2084.3 93.4M2084.3 80.1L2071.9 93.4" stroke="#a3a9a8"/>
</g>
<path d="M38.6 295.6Q34.05 300.3 29.1 300.5Q31.7 304.3 30 310.1Q34.52 305.7 39.4 305.8Q36.9 301.7 38.6 295.6Z" fill="#959b9a"/>
<circle cx="1273.7" cy="86.5" r="1.8" fill="#a3a9a8"/><circle cx="1281.8" cy="86.5" r="1.8" fill="#a3a9a8"/><circle cx="1290" cy="86.5" r="1.8" fill="#a3a9a8"/>
<!-- git badge -->
<circle cx="43.8" cy="248.2" r="12.6" fill="#e2e4e5"/>
<text x="43.8" y="254.2" text-anchor="middle" font-family="Liberation Sans" font-weight="bold" font-size="16.5" fill="#1a1a1a">9</text>
</svg>
</body></html>
